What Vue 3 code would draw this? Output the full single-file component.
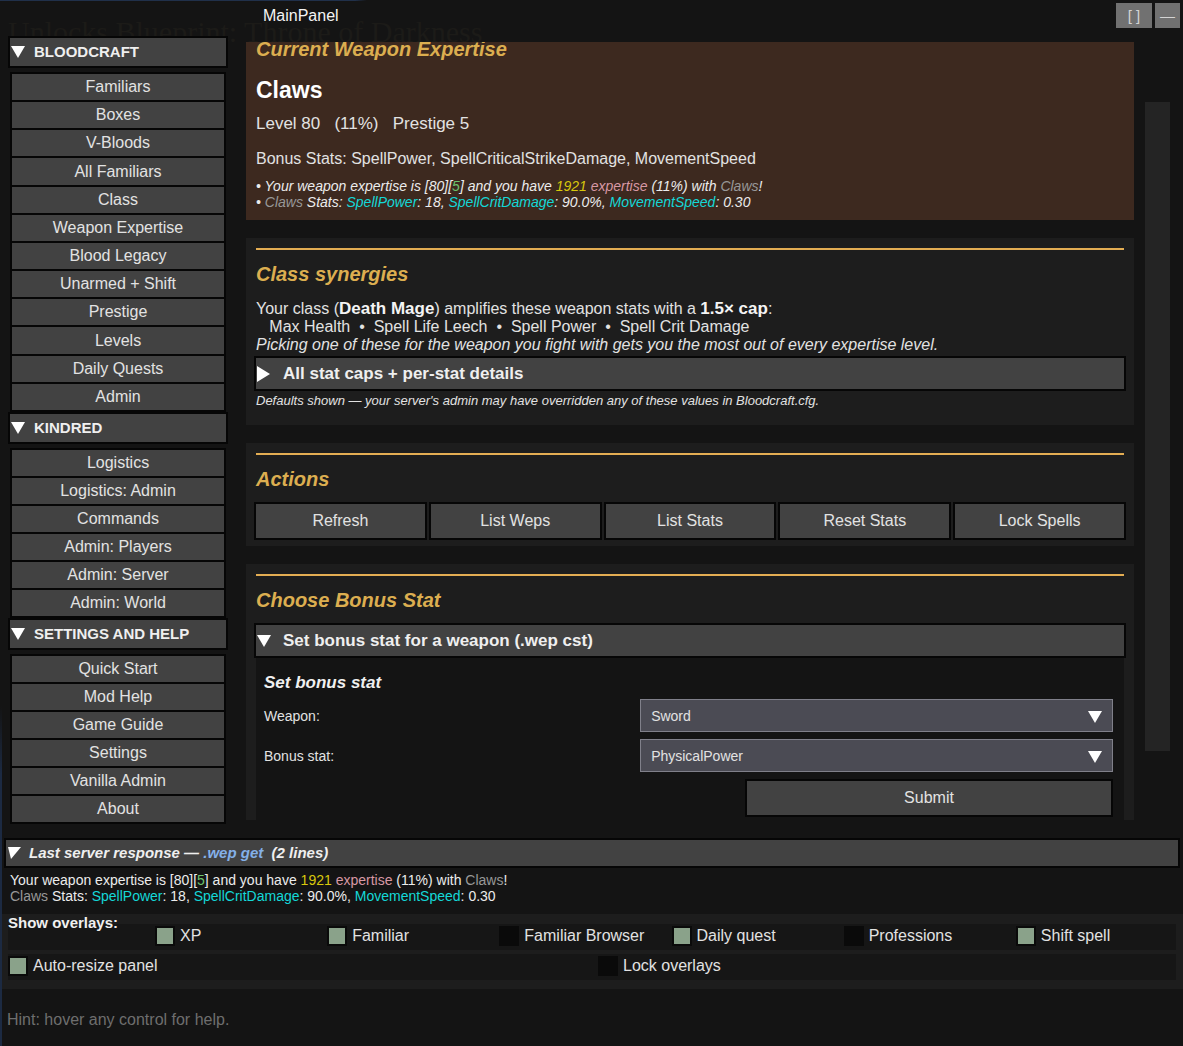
<script setup>
import { ref, onMounted } from 'vue'

const groups = [
  {
    title: 'BLOODCRAFT',
    items: ['Familiars', 'Boxes', 'V-Bloods', 'All Familiars', 'Class', 'Weapon Expertise', 'Blood Legacy', 'Unarmed + Shift', 'Prestige', 'Levels', 'Daily Quests', 'Admin'],
  },
  {
    title: 'KINDRED',
    items: ['Logistics', 'Logistics: Admin', 'Commands', 'Admin: Players', 'Admin: Server', 'Admin: World'],
  },
  {
    title: 'SETTINGS AND HELP',
    items: ['Quick Start', 'Mod Help', 'Game Guide', 'Settings', 'Vanilla Admin', 'About'],
  },
]

const response = [
  [
    { t: 'Your weapon expertise is [80][' },
    { t: '5', c: 'green' },
    { t: '] and you have ' },
    { t: '1921', c: 'yellow' },
    { t: ' ' },
    { t: 'expertise', c: 'pink' },
    { t: ' (11%) with ' },
    { t: 'Claws', c: 'grey' },
    { t: '!' },
  ],
  [
    { t: 'Claws', c: 'grey' },
    { t: ' Stats: ' },
    { t: 'SpellPower', c: 'cyan' },
    { t: ': 18, ' },
    { t: 'SpellCritDamage', c: 'cyan' },
    { t: ': 90.0%, ' },
    { t: 'MovementSpeed', c: 'cyan' },
    { t: ': 0.30' },
  ],
]

const actions = ['Refresh', 'List Weps', 'List Stats', 'Reset Stats', 'Lock Spells']

const overlays = ref([
  { label: 'XP', on: true },
  { label: 'Familiar', on: true },
  { label: 'Familiar Browser', on: false },
  { label: 'Daily quest', on: true },
  { label: 'Professions', on: false },
  { label: 'Shift spell', on: true },
])
const options = ref([
  { label: 'Auto-resize panel', on: true },
  { label: 'Lock overlays', on: false },
])

const weapon = ref('Sword')
const stat = ref('PhysicalPower')
const scroller = ref(null)

onMounted(() => {
  scroller.value.scrollTop = 29
})
</script>

<template>
  <div class="panel">
    <div class="ghost" aria-hidden="true">Unlocks Blueprint: Throne of Darkness</div>

    <header class="titlebar">
      <h1>MainPanel</h1>
      <div class="window-buttons">
        <button type="button" class="win wide">[ ]</button>
        <button type="button" class="win">—</button>
      </div>
    </header>

    <div class="body">
      <nav class="sidebar">
        <section v-for="g in groups" :key="g.title" class="group">
          <button type="button" class="bar group-head">
            <svg class="tri" viewBox="0 0 14 12"><path d="M0 0H14L7 12Z" /></svg>
            <span>{{ g.title }}</span>
          </button>
          <div class="group-list">
            <button v-for="i in g.items" :key="i" type="button">{{ i }}</button>
          </div>
        </section>
      </nav>

      <main ref="scroller" class="content">
        <section class="card current">
          <hr />
          <h2>Current Weapon Expertise</h2>
          <h3 class="weapon-name">Claws</h3>
          <p class="level">Level 80&nbsp;&nbsp; (11%)&nbsp;&nbsp; Prestige 5</p>
          <p class="bonus">Bonus Stats: SpellPower, SpellCriticalStrikeDamage, MovementSpeed</p>
          <div class="log italic">
            <p v-for="(line, n) in response" :key="n">• <span v-for="(s, k) in line" :key="k" :class="s.c">{{ s.t }}</span></p>
          </div>
        </section>

        <section class="card">
          <hr />
          <h2>Class synergies</h2>
          <div class="synergy">
            <p>Your class (<strong>Death Mage</strong>) amplifies these weapon stats with a <strong>1.5× cap</strong>:</p>
            <p>&nbsp;&nbsp; Max Health&nbsp; •&nbsp; Spell Life Leech&nbsp; •&nbsp; Spell Power&nbsp; •&nbsp; Spell Crit Damage</p>
            <p class="italic">Picking one of these for the weapon you fight with gets you the most out of every expertise level.</p>
          </div>
          <button type="button" class="bar fold">
            <svg class="tri tall" viewBox="0 0 14 16"><path d="M0 0L13 8L0 16Z" /></svg>
            <span>All stat caps + per-stat details</span>
          </button>
          <p class="note italic">Defaults shown — your server's admin may have overridden any of these values in Bloodcraft.cfg.</p>
        </section>

        <section class="card">
          <hr />
          <h2>Actions</h2>
          <div class="actions">
            <button v-for="a in actions" :key="a" type="button" class="action">{{ a }}</button>
          </div>
        </section>

        <section class="card">
          <hr />
          <h2>Choose Bonus Stat</h2>
          <button type="button" class="bar fold">
            <svg class="tri" viewBox="0 0 14 12"><path d="M0 0H14L7 12Z" /></svg>
            <span>Set bonus stat for a weapon (.wep cst)</span>
          </button>
          <form class="form" @submit.prevent>
            <h3>Set bonus stat</h3>
            <div class="field">
              <label for="weapon">Weapon:</label>
              <div class="select">
                <select id="weapon" v-model="weapon">
                  <option>Sword</option>
                  <option>Claws</option>
                </select>
                <svg viewBox="0 0 14 12"><path d="M0 0H14L7 12Z" /></svg>
              </div>
            </div>
            <div class="field">
              <label for="stat">Bonus stat:</label>
              <div class="select">
                <select id="stat" v-model="stat">
                  <option>PhysicalPower</option>
                  <option>SpellPower</option>
                </select>
                <svg viewBox="0 0 14 12"><path d="M0 0H14L7 12Z" /></svg>
              </div>
            </div>
            <button type="submit" class="action submit">Submit</button>
          </form>
        </section>
      </main>

      <div class="scroll-thumb"></div>
    </div>

    <footer class="footer">
      <button type="button" class="bar response-head">
        <svg class="tri" viewBox="0 0 14 12"><path d="M1 0H14L4 12Z" /></svg>
        <span>Last server response — <span class="blue">.wep get</span>&nbsp; (2 lines)</span>
      </button>
      <div class="log response">
        <p v-for="(line, n) in response" :key="n"><span v-for="(s, k) in line" :key="k" :class="s.c">{{ s.t }}</span></p>
      </div>

      <div class="toggles">
        <div class="toggle-row overlays">
          <span class="caption">Show overlays:</span>
          <label v-for="o in overlays" :key="o.label"><input v-model="o.on" type="checkbox" />{{ o.label }}</label>
        </div>
        <div class="toggle-row options">
          <label v-for="o in options" :key="o.label"><input v-model="o.on" type="checkbox" />{{ o.label }}</label>
        </div>
      </div>

      <p class="hint">Hint: hover any control for help.</p>
    </footer>
  </div>
</template>

<style>
body {
  background: #141414;
}
</style>

<style scoped>
* {
  box-sizing: border-box;
}

.panel {
  position: relative;
  display: flex;
  flex-direction: column;
  height: 100vh;
  overflow: hidden;
  background:
    linear-gradient(90deg, #20304a 30%, #141414 31%) top left / 100% 1px no-repeat,
    linear-gradient(#141414, #1c2a42 20%) bottom left / 2px 340px no-repeat,
    #141414;
  color: #e2e2e2;
  font: 16px/18px "Liberation Sans", Arial, sans-serif;
}

h1, h2, h3, p {
  margin: 0;
}

button, select {
  margin: 0;
  font: inherit;
  color: inherit;
}

.ghost {
  position: absolute;
  top: 16px;
  left: 8px;
  height: 26px;
  overflow: hidden;
  font: 30px/32px "Liberation Serif", serif;
  white-space: nowrap;
  color: #1c1b18;
}

.titlebar {
  position: relative;
  display: flex;
  justify-content: space-between;
  height: 36px;
  padding: 3px 3px 0 263px;
}

h1 {
  font-size: 16px;
  font-weight: 400;
  line-height: 26px;
  color: #f4f4f4;
}

.window-buttons {
  display: flex;
  gap: 3px;
}

.win {
  width: 25px;
  height: 25px;
  padding: 0;
  border: 0;
  background: #717171;
  color: #d4d4d4;
  font-size: 15px;
}

.win.wide {
  width: 36px;
}

.body {
  position: relative;
  display: flex;
  flex: 1;
  min-height: 0;
  padding: 0 13px 14px 8px;
}

.bar {
  display: flex;
  align-items: center;
  border: 2px solid #060606;
  background: #424242;
  color: #efefef;
  font-weight: 700;
  text-align: left;
}

.tri {
  flex: none;
  width: 14px;
  height: 12px;
  fill: #fff;
}

.tri.tall {
  height: 16px;
}

.sidebar {
  display: flex;
  flex-direction: column;
  width: 220px;
}

.group {
  display: flex;
  flex-direction: column;
}

.group:first-child {
  flex: 1;
}

.group-head {
  gap: 9px;
  height: 32px;
  padding: 0 1px;
  font-size: 15px;
}

.group-list {
  display: grid;
  flex: 1;
  grid-auto-rows: minmax(26px, 1fr);
  gap: 2px;
  margin: 4px 2px 0;
  padding: 2px;
  background: #060606;
}

.group-list button {
  padding: 0;
  border: 0;
  background: #424242;
}

.content {
  flex: 1;
  min-width: 0;
  margin: 6px 11px 4px 18px;
  overflow-y: auto;
  scrollbar-width: none;
}

.scroll-thumb {
  width: 25px;
  margin: 66px 0 73px;
  background: #242424;
}

.card {
  margin-bottom: 18px;
  padding: 10px 10px 6px;
  background: #1d1d1d;
}

.card.current {
  background: #3d291f;
}

hr {
  height: 2px;
  margin: 0 0 12px;
  border: 0;
  background: #e3ad53;
}

h2 {
  margin-bottom: 11px;
  font-size: 20px;
  font-style: italic;
  line-height: 24px;
  color: #dcae50;
}

.weapon-name {
  padding-top: 5px;
  font-size: 23px;
  line-height: 26px;
  color: #fff;
}

.level {
  margin-top: 11px;
  font-size: 17px;
  line-height: 20px;
}

.bonus {
  margin-top: 15px;
  line-height: 20px;
}

.log {
  font-size: 14px;
  line-height: 16px;
  color: #ececec;
}

.current .log {
  margin: 9px 0 4px;
}

.italic {
  font-style: italic;
}

.green { color: #6cc26c; }
.yellow { color: #d8c80c; }
.pink { color: #d898a4; }
.grey { color: #989898; }
.cyan { color: #14d8d8; }
.blue { color: #84b0e8; }

.synergy {
  padding: 3px 0 2px;
}

strong {
  font-size: 17px;
  color: #f4f4f4;
}

.fold {
  gap: 12px;
  width: calc(100% + 4px);
  height: 35px;
  margin: 0 -2px;
  padding: 0 1px;
  font-size: 17px;
}

.note {
  padding: 2px 0 10px;
  font-size: 13px;
  line-height: 16px;
}

.actions {
  display: grid;
  grid-template-columns: repeat(5, 1fr);
  gap: 2px;
  margin: 0 -2px;
}

.action {
  height: 38px;
  padding: 0;
  border: 2px solid #060606;
  background: #424242;
}

.form {
  display: flex;
  flex-direction: column;
  gap: 7px;
  padding: 16px 11px 40px 8px;
  background: #141414;
}

.form h3 {
  font-size: 17px;
  font-style: italic;
  color: #f0f0f0;
}

.field {
  display: grid;
  grid-template-columns: 35fr 44fr;
  align-items: center;
  font-size: 14px;
}

.select {
  position: relative;
}

.select select {
  display: block;
  width: 100%;
  height: 33px;
  padding: 0 10px;
  border: 1px solid #80808a;
  border-radius: 0;
  appearance: none;
  background: #4b4b54;
}

.select svg {
  position: absolute;
  top: 12px;
  right: 11px;
  width: 14px;
  height: 12px;
  fill: #fff;
  pointer-events: none;
}

.submit {
  width: 368px;
  margin-left: auto;
}

.footer {
  position: relative;
}

.response-head {
  gap: 8px;
  width: calc(100% - 7px);
  height: 30px;
  margin-left: 4px;
  padding: 0 1px;
  font-size: 15px;
  font-style: italic;
}

.response {
  padding: 4px 10px 10px;
}

.toggles {
  display: flex;
  flex-direction: column;
  gap: 4px;
  margin-left: 2px;
  padding: 10px 7px 9px 6px;
  background: #1d1d1d;
}

.toggle-row {
  display: grid;
  gap: 12px;
  height: 26px;
  background: #161616;
}

.overlays {
  grid-template-columns: 135px repeat(6, 1fr);
}

.options {
  grid-template-columns: repeat(2, 1fr);
}

.caption {
  margin-top: -10px;
  font-size: 15px;
  font-weight: 700;
  color: #f0f0f0;
}

.toggle-row label {
  display: flex;
  align-items: center;
  gap: 5px;
  padding-bottom: 2px;
  white-space: nowrap;
}

.toggle-row input {
  width: 20px;
  height: 20px;
  margin: 0;
  border: 2px solid #0a0a0a;
  appearance: none;
  background: #0a0a0a;
}

.toggle-row input:checked {
  background: #8aa28a;
}

.hint {
  padding: 21px 7px 16px;
  line-height: 20px;
  color: #6e6e6e;
}
</style>
